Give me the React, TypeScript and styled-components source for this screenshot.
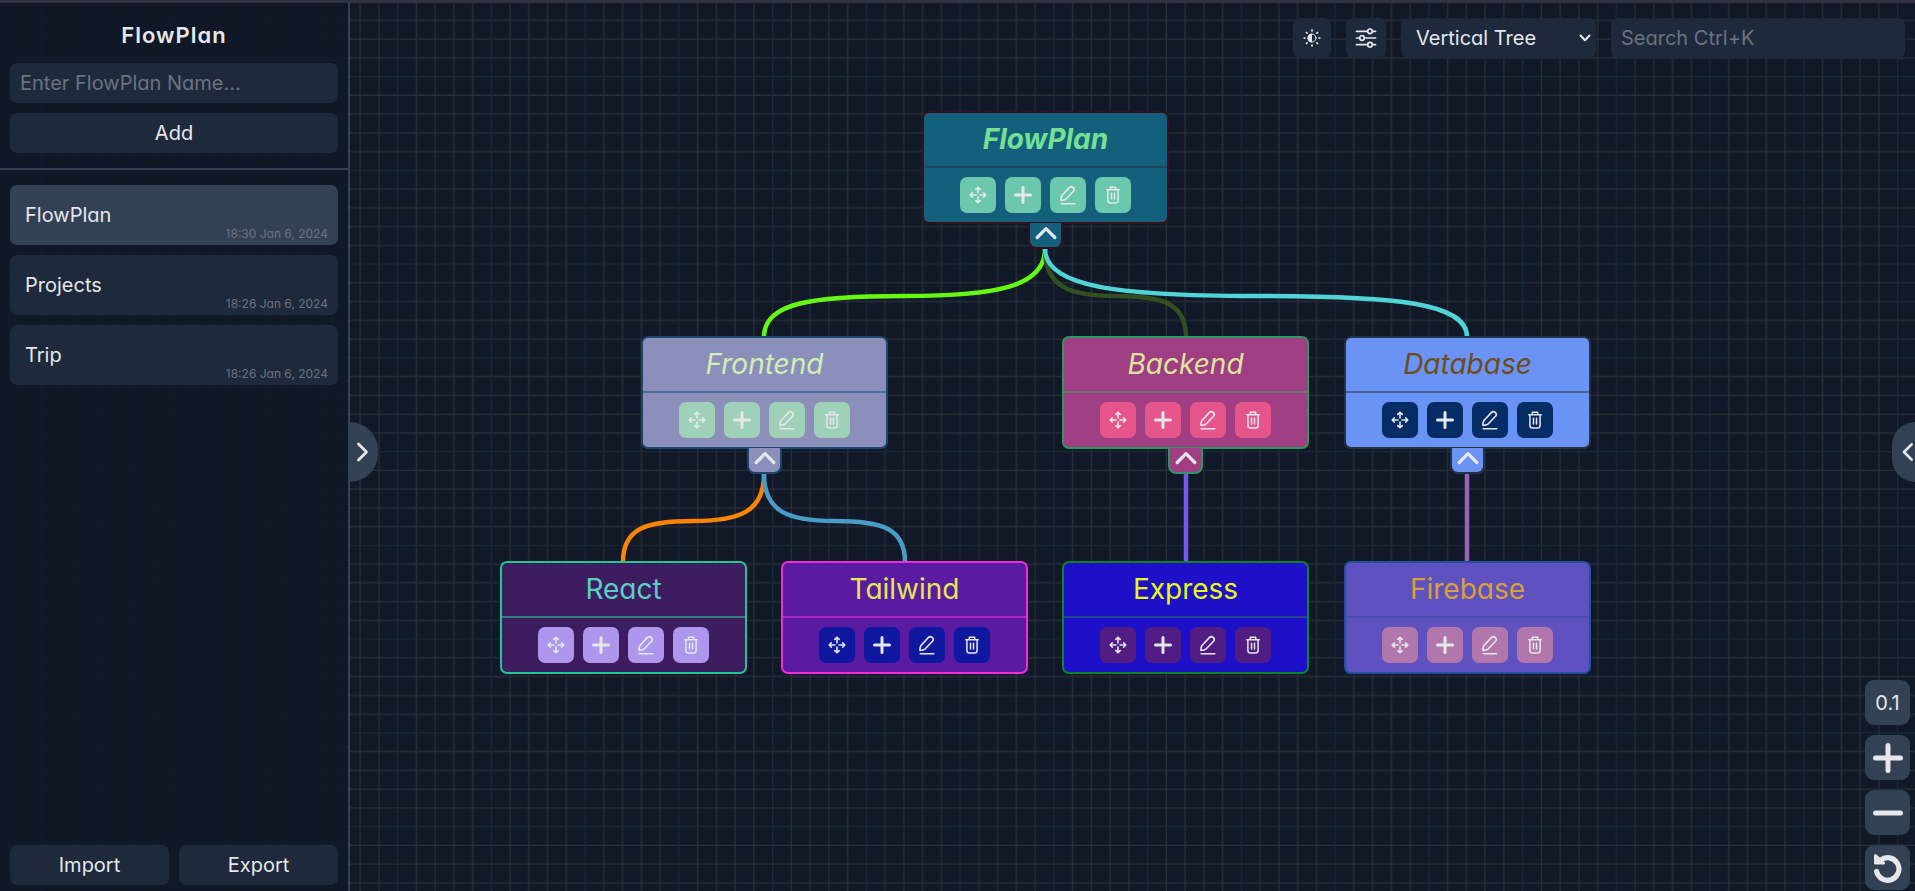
import React from "react";
import styled, { createGlobalStyle, css } from "styled-components";

const GlobalStyle = createGlobalStyle`
  * { box-sizing: border-box; }
  body {
    margin: 0;
    background: #111827;
    color: #e5e7eb;
    font-family: Inter, "Open Sans", sans-serif;
    font-feature-settings: "cv11" 1;
    font-size: 20px;
    overflow: hidden;
  }
  button, input, select {
    font: inherit;
    font-feature-settings: inherit;
    color: inherit;
    border: 0;
    margin: 0;
    padding: 0;
  }
  button { cursor: pointer; }
`;

const Page = styled.div`
  position: relative;
  display: flex;
  height: 100vh;
  border-top: 3px solid #303142;
`;

const GridLayer = styled.svg`
  position: absolute;
  inset: 0;
  width: 100%;
  height: 100%;
`;

/* ---------- sidebar ---------- */

const Sidebar = styled.aside`
  position: relative;
  flex: 0 0 350px;
  display: flex;
  flex-direction: column;
  background: rgba(17, 24, 39, 0.95);
  border-right: 2px solid #334155;
`;

const SidebarHeader = styled.form`
  display: flex;
  flex-direction: column;
  gap: 10px;
  padding: 15px 10px;
  border-bottom: 2px solid #334155;
`;

const Brand = styled.h1`
  margin: 0;
  font-size: 22px;
  line-height: 35px;
  font-weight: 600;
  letter-spacing: 1px;
  text-align: center;
`;

const field = css`
  height: 40px;
  border-radius: 7px;
  background: #1e293b;
  outline: none;
`;

const TextField = styled.input<{ $width?: string }>`
  ${field}
  width: ${(p) => p.$width ?? "100%"};
  padding: 0 10px;
  &::placeholder { color: #6b7280; opacity: 1; }
`;

const PanelButton = styled.button`
  ${field}
  flex: 1 0 auto;
`;

const PlanList = styled.ul`
  flex: 1;
  display: flex;
  flex-direction: column;
  gap: 10px;
  margin: 0;
  padding: 15px 10px;
  list-style: none;
`;

const PlanItem = styled.button<{ $active?: boolean }>`
  display: grid;
  width: 100%;
  height: 60px;
  padding: 0 10px 0 15px;
  border-radius: 7px;
  background: ${(p) => (p.$active ? "#334155" : "#1e293b")};
  text-align: left;
`;

const PlanName = styled.span`
  grid-area: 1 / 1;
  align-self: center;
`;

const PlanDate = styled.time`
  grid-area: 1 / 1;
  place-self: end;
  font-size: 12px;
  line-height: 22px;
  color: #6b7280;
`;

const SidebarFooter = styled.div`
  display: grid;
  grid-template-columns: 1fr 1fr;
  gap: 10px;
  padding: 0 10px 6px;
`;

/* ---------- canvas ---------- */

const Canvas = styled.main`
  position: relative;
  flex: 1;
  min-width: 0;
  overflow: hidden;
`;

const Toolbar = styled.div`
  position: relative;
  display: flex;
  justify-content: flex-end;
  gap: 15px;
  padding: 15px 10px 0;
`;

const ToolButton = styled.button<{ $width: number }>`
  ${field}
  width: ${(p) => p.$width}px;
  display: grid;
  place-items: center;
`;

const SelectBox = styled.label`
  ${field}
  position: relative;
  width: 195px;
  svg {
    position: absolute;
    right: 4px;
    top: 13px;
    pointer-events: none;
  }
`;

const LayoutSelect = styled.select`
  width: 100%;
  height: 100%;
  padding: 0 15px;
  background: transparent;
  appearance: none;
  outline: none;
`;

const SideToggle = styled.button<{ $side: "left" | "right" }>`
  position: absolute;
  top: calc(50% + 5px);
  ${(p) => p.$side}: 0;
  width: ${(p) => (p.$side === "left" ? 28 : 23)}px;
  height: 60px;
  transform: translateY(-50%);
  display: flex;
  align-items: center;
  justify-content: ${(p) => (p.$side === "left" ? "flex-start" : "flex-end")};
  border-radius: ${(p) => (p.$side === "left" ? "0 30px 30px 0" : "30px 0 0 30px")};
  background: #334155;
`;

const ZoomControls = styled.div`
  position: absolute;
  right: 5px;
  bottom: 1px;
  display: flex;
  flex-direction: column;
  gap: 10px;
`;

const ZoomButton = styled.button`
  display: grid;
  place-items: center;
  width: 45px;
  height: 45px;
  border-radius: 9px;
  background: #334155;
`;

/* ---------- tree ---------- */

const Tree = styled.div`
  position: absolute;
  left: 150px;
  top: 108px;
  width: 1092px;
  height: 563px;
`;

const Edges = styled.svg`
  position: absolute;
  inset: 0;
  width: 100%;
  height: 100%;
`;

type NodeData = {
  name: string;
  x: number;
  y: number;
  bg: string;
  border: string;
  divider: string;
  text: string;
  button: string;
  italic?: boolean;
  bold?: boolean;
  parent?: boolean;
};

const NodeSpot = styled.div<{ $x: number; $y: number }>`
  position: absolute;
  left: ${(p) => p.$x}px;
  top: ${(p) => p.$y}px;
  display: flex;
  flex-direction: column;
  align-items: center;
`;

const Card = styled.article<{ $bg: string; $border: string }>`
  width: 247px;
  height: 113px;
  border: 2px solid ${(p) => p.$border};
  border-radius: 7px;
  background: ${(p) => p.$bg};
`;

const CardTitle = styled.h2<{ $color: string; $line: string; $italic?: boolean; $bold?: boolean }>`
  height: 55px;
  margin: 0;
  border-bottom: 2px solid ${(p) => p.$line};
  color: ${(p) => p.$color};
  font-size: 28px;
  line-height: 52px;
  font-weight: ${(p) => (p.$bold ? 700 : 400)};
  font-style: ${(p) => (p.$italic ? "italic" : "normal")};
  text-align: center;
`;

const CardActions = styled.div`
  display: flex;
  justify-content: center;
  gap: 9px;
  padding-top: 9px;
`;

const CardButton = styled.button<{ $bg: string }>`
  display: grid;
  place-items: center;
  width: 36px;
  height: 36px;
  border-radius: 7px;
  background: ${(p) => p.$bg};
`;

const CollapseTab = styled.button<{ $bg: string; $border: string }>`
  display: grid;
  place-items: center;
  width: 35px;
  height: 26px;
  margin-top: -1px;
  padding-bottom: 4px;
  border: 2px solid ${(p) => p.$border};
  border-top: 0;
  border-radius: 0 0 8px 8px;
  background: ${(p) => p.$bg};
`;

/* ---------- icons ---------- */

const stroke = {
  fill: "none",
  stroke: "currentColor",
  strokeLinecap: "round",
  strokeLinejoin: "round",
} as const;

const MoveIcon = () => (
  <svg width="18" height="18" viewBox="0 0 18 18" {...stroke} strokeWidth="1.6" aria-hidden>
    <path d="M9 7V1.2M6.8 3.4 9 1.2l2.200 2.200M9 11v5.800M6.800 14.600 9 16.800l2.200-2.200M7 9H1.200M3.400 6.800 1.200 9l2.200 2.200M11 9h5.800M14.600 6.800 16.800 9l-2.200 2.200" />
  </svg>
);

const PlusIcon = ({ size, weight }: { size: number; weight: number }) => (
  <svg width={size} height={size} viewBox="0 0 30 30" {...stroke} strokeWidth={weight} aria-hidden>
    <path d="M15 2.500v25M2.500 15h25" />
  </svg>
);

const MinusIcon = () => (
  <svg width="30" height="30" viewBox="0 0 30 30" {...stroke} strokeWidth="5" aria-hidden>
    <path d="M2.500 15h25" />
  </svg>
);

const EditIcon = () => (
  <svg width="18" height="20" viewBox="0 0 18 20" {...stroke} strokeWidth="1.600" aria-hidden>
    <path d="M3 10.500 10.300 2.600a2.800 2.800 0 0 1 4.200 3.700L7.300 13.800Q5.500 15.200 2 15.400 1.700 12.500 3 10.500zM2.200 18.800h13.600" />
  </svg>
);

const TrashIcon = () => (
  <svg width="16" height="18" viewBox="0 0 16 18" {...stroke} strokeWidth="1.500" aria-hidden>
    <path d="M1.800 3.700h12.400M5.300 3.400V1.200h5.400v2.200M2.900 3.900v10.600q0 2.400 2.400 2.400h5.400q2.400 0 2.400-2.400V3.900M6.500 7.200v5.800M9.500 7.200v5.800" />
  </svg>
);

const UpIcon = () => (
  <svg width="22" height="14" viewBox="0 0 22 14" {...stroke} strokeWidth="3.200" aria-hidden>
    <path d="M2.200 11.500 11 2.700l8.800 8.800" />
  </svg>
);

const SideIcon = ({ flip }: { flip?: boolean }) => (
  <svg width="24" height="22" viewBox="0 0 24 22" {...stroke} strokeWidth="2.800" aria-hidden>
    <path d={flip ? "M20.500 3 12.500 11l8 8" : "M8.500 3l8 8-8 8"} />
  </svg>
);

const SelectArrow = () => (
  <svg width="14" height="14" viewBox="0 0 14 14" {...stroke} strokeWidth="2" aria-hidden>
    <path d="M2.500 4.500 7 9.200l4.500-4.700" />
  </svg>
);

const ThemeIcon = () => (
  <svg width="18" height="18" viewBox="0 0 18 18" {...stroke} strokeWidth="1.700" aria-hidden>
    <circle cx="9" cy="9" r="4" strokeWidth="1" />
    <path d="M9 4.500a4.500 4.500 0 0 0 0 9z" fill="currentColor" stroke="none" />
    <path d="M9 1.200v.8M9 16v.8M1.200 9H2M16 9h.8M3.500 3.500l.6.6M13.900 13.900l.6.6M3.500 14.500l.6-.6M13.900 4.100l.6-.6" />
  </svg>
);

const SlidersIcon = () => (
  <svg width="22" height="20" viewBox="0 0 22 20" {...stroke} strokeWidth="1.700" aria-hidden>
    <path d="M1.500 3.300h11M17.500 3.300h3M1.500 10h3M9.500 10h11M1.500 16.700h11M17.500 16.700h3" />
    <circle cx="15" cy="3.300" r="2.300" />
    <circle cx="7" cy="10" r="2.300" />
    <circle cx="15" cy="16.700" r="2.300" />
  </svg>
);

const ResetIcon = () => (
  <svg width="30" height="30" viewBox="0 0 30 30" {...stroke} strokeWidth="5.200" aria-hidden>
    <path d="M7.500 7.200A11.300 11.300 0 1 1 3.600 18.500" />
    <path d="M2.500 2.500v7.500h8z" strokeWidth="3" fill="currentColor" />
  </svg>
);

/* ---------- data ---------- */

const plans = [
  { name: "FlowPlan", date: "18:30 Jan 6, 2024" },
  { name: "Projects", date: "18:26 Jan 6, 2024" },
  { name: "Trip", date: "18:26 Jan 6, 2024" },
];

const nodes: NodeData[] = [
  { name: "FlowPlan", x: 422, y: 0, bg: "#135f7c", border: "#34111b", divider: "#24445a", text: "#75e094", button: "#6cc8ad", italic: true, bold: true, parent: true },
  { name: "Frontend", x: 141, y: 225, bg: "#8d8fbb", border: "#1c456f", divider: "#4c6c97", text: "#d1efb2", button: "#9fd1b9", italic: true, parent: true },
  { name: "Backend", x: 562, y: 225, bg: "#9f3e83", border: "#2d9762", divider: "#667775", text: "#dde49b", button: "#e5548b", italic: true, parent: true },
  { name: "Database", x: 844, y: 225, bg: "#6993f4", border: "#243244", divider: "#4a6398", text: "#714b17", button: "#052c65", italic: true, parent: true },
  { name: "React", x: 0, y: 450, bg: "#3e1c60", border: "#21c596", divider: "#317d7f", text: "#5bcfc4", button: "#ad96ec" },
  { name: "Tailwind", x: 281, y: 450, bg: "#5a1aa2", border: "#ef2ddd", divider: "#b125c6", text: "#e2e953", button: "#0f189f" },
  { name: "Express", x: 562, y: 450, bg: "#1e0fc8", border: "#0d8330", divider: "#1b4a88", text: "#e6fa13", button: "#521d82" },
  { name: "Firebase", x: 844, y: 450, bg: "#6051c0", border: "#2450a0", divider: "#4450b0", text: "#d99f3b", button: "#b177ad" },
];

const edges = [
  { from: 545, to: 264, y: 138, color: "#66f815" },
  { from: 545, to: 686, y: 138, color: "#334f20" },
  { from: 545, to: 967, y: 138, color: "#51d4d6" },
  { from: 264, to: 123, y: 363, color: "#fb8306" },
  { from: 264, to: 405, y: 363, color: "#4b9bc7" },
  { from: 686, to: 686, y: 363, color: "#7459ee" },
  { from: 967, to: 967, y: 363, color: "#9a61bd" },
];

const edgePath = (from: number, to: number, y: number) => {
  if (from === to) return `M${from} ${y}v88`;
  const mid = (from + to) / 2;
  const reach = (mid - from) * 0.33;
  return `M${from} ${y}C${from} ${y + 37} ${from + reach} ${y + 47} ${mid} ${y + 47}S${to} ${y + 54} ${to} ${y + 88}`;
};

const steps = [1, 2, 3, 4];

const Grid = () => (
  <GridLayer aria-hidden>
    <defs>
      <pattern id="grid" width="75" height="75" patternUnits="userSpaceOnUse" patternTransform="translate(22 73) scale(1.250)">
        {steps.map((n) => (
          <path key={n} d={`M${n * 15 + 0.5} 0v75M0 ${n * 15 + 0.5}h75`} stroke="#2a2f39" strokeWidth="1" />
        ))}
        <path d="M.5 0v75M0 .5h75" stroke="#172a35" strokeWidth="1" />
      </pattern>
    </defs>
    <rect width="100%" height="100%" fill="url(#grid)" />
  </GridLayer>
);

const TreeNode = ({ node }: { node: NodeData }) => (
  <NodeSpot $x={node.x} $y={node.y}>
    <Card $bg={node.bg} $border={node.border}>
      <CardTitle $color={node.text} $line={node.divider} $italic={node.italic} $bold={node.bold}>
        {node.name}
      </CardTitle>
      <CardActions>
        <CardButton $bg={node.button} aria-label="Move"><MoveIcon /></CardButton>
        <CardButton $bg={node.button} aria-label="Add child"><PlusIcon size={18} weight={5} /></CardButton>
        <CardButton $bg={node.button} aria-label="Edit"><EditIcon /></CardButton>
        <CardButton $bg={node.button} aria-label="Delete"><TrashIcon /></CardButton>
      </CardActions>
    </Card>
    {node.parent && (
      <CollapseTab $bg={node.bg} $border={node.border} aria-label="Collapse">
        <UpIcon />
      </CollapseTab>
    )}
  </NodeSpot>
);

export default function App() {
  return (
    <>
      <GlobalStyle />
      <Page>
        <Grid />
        <Sidebar>
          <SidebarHeader onSubmit={(e) => e.preventDefault()}>
            <Brand>FlowPlan</Brand>
            <TextField aria-label="FlowPlan name" placeholder="Enter FlowPlan Name..." />
            <PanelButton type="submit">Add</PanelButton>
          </SidebarHeader>
          <PlanList>
            {plans.map((plan, i) => (
              <li key={plan.name}>
                <PlanItem $active={i === 0}>
                  <PlanName>{plan.name}</PlanName>
                  <PlanDate>{plan.date}</PlanDate>
                </PlanItem>
              </li>
            ))}
          </PlanList>
          <SidebarFooter>
            <PanelButton>Import</PanelButton>
            <PanelButton>Export</PanelButton>
          </SidebarFooter>
        </Sidebar>
        <Canvas>
          <Tree>
            <Edges aria-hidden>
              {edges.map((e) => (
                <path key={e.color} d={edgePath(e.from, e.to, e.y)} stroke={e.color} strokeWidth="4.500" fill="none" />
              ))}
            </Edges>
            {nodes.map((node) => (
              <TreeNode key={node.name} node={node} />
            ))}
          </Tree>
          <Toolbar>
            <ToolButton $width={38} aria-label="Toggle theme"><ThemeIcon /></ToolButton>
            <ToolButton $width={40} aria-label="Settings"><SlidersIcon /></ToolButton>
            <SelectBox>
              <LayoutSelect aria-label="Layout">
                <option>Vertical Tree</option>
                <option>Horizontal Tree</option>
              </LayoutSelect>
              <SelectArrow />
            </SelectBox>
            <TextField type="search" aria-label="Search" placeholder="Search Ctrl+K" $width="294px" />
          </Toolbar>
          <SideToggle $side="left" aria-label="Toggle sidebar"><SideIcon /></SideToggle>
          <SideToggle $side="right" aria-label="Open panel"><SideIcon flip /></SideToggle>
          <ZoomControls>
            <ZoomButton>0.1</ZoomButton>
            <ZoomButton aria-label="Zoom in"><PlusIcon size={30} weight={5} /></ZoomButton>
            <ZoomButton aria-label="Zoom out"><MinusIcon /></ZoomButton>
            <ZoomButton aria-label="Reset view"><ResetIcon /></ZoomButton>
          </ZoomControls>
        </Canvas>
      </Page>
    </>
  );
}
